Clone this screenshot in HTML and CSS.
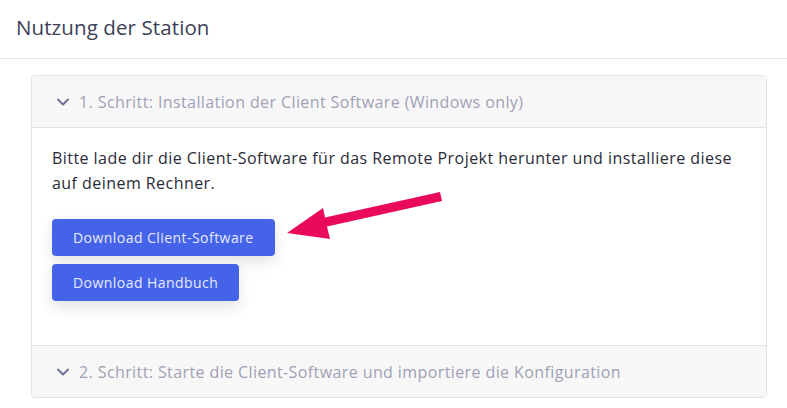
FILE: index.html
```html
<!DOCTYPE html>
<html lang="de">
<head>
<meta charset="utf-8">
<title>Nutzung der Station</title>
<link rel="stylesheet" href="styles.css">
</head>
<body>
<div class="page">
  <div class="title-bar"><h1 class="title">Nutzung der Station</h1></div>
  <div class="accordion">
    <div class="acc-item">
      <div class="acc-header acc-header-first">
        <svg class="chev" width="14" height="10" viewBox="0 0 14 10"><path d="M2 2.5 L7 7.5 L12 2.5" fill="none" stroke="currentColor" stroke-width="2" stroke-linecap="round" stroke-linejoin="round"/></svg>
        <span>1. Schritt: Installation der Client Software (Windows only)</span>
      </div>
      <div class="acc-body">
        <p class="lead">Bitte lade dir die Client-Software für das Remote Projekt herunter und installiere diese auf deinem Rechner.</p>
        <div class="btns">
          <button class="btn">Download Client-Software</button>
          <button class="btn">Download Handbuch</button>
        </div>
      </div>
    </div>
    <div class="acc-item">
      <div class="acc-header acc-header-last">
        <svg class="chev" width="14" height="10" viewBox="0 0 14 10"><path d="M2 2.5 L7 7.5 L12 2.5" fill="none" stroke="currentColor" stroke-width="2" stroke-linecap="round" stroke-linejoin="round"/></svg>
        <span>2. Schritt: Starte die Client-Software und importiere die Konfiguration</span>
      </div>
    </div>
  </div>
  <svg class="arrow" width="787" height="408" viewBox="0 0 787 408"><polygon points="287,233 323,208 325,217.6 440,192.1 442,200.9 327,226.4 330,239" fill="#ea0a5b"/></svg>
</div>
</body>
</html>
```
FILE: styles.css
```css
html, body { margin: 0; padding: 0; background: #fff; }
body { font-family: "Open Sans", Lato, sans-serif; color: #2e2f3e; }
.page { position: relative; width: 787px; height: 408px; overflow: hidden; }
.title-bar { height: 59px; border-bottom: 1px solid #e6e6ec; box-sizing: border-box; padding: 0 16px 4px; display: flex; align-items: center; }
.title { margin: 0; font-size: 20.5px; font-weight: 400; color: #3d3f58; letter-spacing: 0.1px; }
.accordion { margin: 16px 20px 0 31px; border: 1px solid #e2e2e2; border-radius: 4px; overflow: hidden; }
.acc-header { background: #f7f7f7; height: 51px; display: flex; align-items: center; padding-left: 24px; gap: 9px; font-size: 16px; letter-spacing: 0.4px; color: #a0a1b5; }
.acc-header-first { border-bottom: 1px solid #e2e2e2; }
.acc-header-last { border-top: 1px solid #e2e2e2; }
.chev { color: #6f7393; flex: none; }
.acc-body { padding: 18px 20px 44px 20px; }
.lead { margin: 0 0 23px; font-size: 16px; letter-spacing: 0.45px; line-height: 25px; color: #2a2b38; }
.btns { display: flex; flex-direction: column; align-items: flex-start; gap: 8px; }
.btn { font-family: inherit; font-size: 14px; letter-spacing: 0.45px; color: #e6eaff; background: #4563e9; border: none; border-radius: 4px; height: 37px; padding: 0 21px; box-shadow: 0 6px 14px rgba(40, 40, 70, 0.13); cursor: pointer; }
.arrow { position: absolute; left: 0; top: 0; pointer-events: none; }
```
